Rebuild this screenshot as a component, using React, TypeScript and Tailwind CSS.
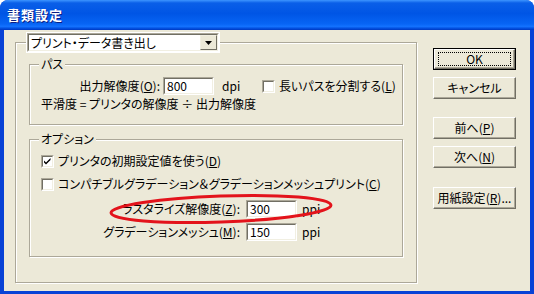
import React from "react";

const Key = ({ k }: { k: string }) => (
  <>
    (<span className="underline underline-offset-[1px]">{k}</span>)
  </>
);

const Sunken = ({ className = "", children }: { className?: string; children?: React.ReactNode }) => (
  <div
    className={`border border-t-[#ACA899] border-l-[#ACA899] border-b-white border-r-white ${className}`}
  >
    <div className="h-full w-full border border-t-[#716F64] border-l-[#716F64] border-b-[#F1EFE2] border-r-[#F1EFE2] bg-white">
      {children}
    </div>
  </div>
);

const TextBox = ({ value }: { value: string }) => (
  <Sunken className="w-[51px] h-[18px]">
    <div className="pl-[2px] leading-[14px] text-[12px]">{value}</div>
  </Sunken>
);

const Check = ({ checked }: { checked?: boolean }) => (
  <Sunken className="w-[13px] h-[13px] shrink-0">
    {checked && (
      <svg width="9" height="9" viewBox="0 0 9 9" className="block">
        <path d="M1 3.5 L3 5.5 L7.5 1 L7.5 3 L3 7.5 L1 5.5 Z" fill="#000" />
      </svg>
    )}
  </Sunken>
);

const Btn = ({ children, def }: { children: React.ReactNode; def?: boolean }) => (
  <div className={`h-[22px] w-[83px] ${def ? "border border-black" : ""}`}>
    <div className="h-full w-full border border-t-white border-l-white border-r-[#716F64] border-b-[#716F64] shadow-[inset_-1px_-1px_0_#ACA899] flex items-center justify-center">
      {def ? (
        <div className="border border-dotted border-black w-[73px] h-[14px] flex items-center justify-center leading-[12px]">
          {children}
        </div>
      ) : (
        <span className="leading-[14px]">{children}</span>
      )}
    </div>
  </div>
);

const group =
  "border border-[#ACA899] shadow-[inset_1px_1px_0_#fff,1px_1px_0_#fff] min-w-0";

export default function App() {
  return (
    <div className="relative w-[534px] h-[294px] rounded-t-[8px] bg-[#0842D6] flex flex-col overflow-hidden font-['Noto_Sans_CJK_JP',sans-serif] [font-feature-settings:'palt'] text-[12px] text-black">
      {/* TITLE BAR */}
      <div className="h-[30px] shrink-0 bg-[linear-gradient(to_bottom,#3D95FF_0%,#0A5FE8_10%,#0055E5_45%,#0765F5_80%,#1372FF_88%,#0048D8_96%,#0038C0_100%)] flex items-center pl-[7px]">
        <span className="text-white font-bold text-[13px] tracking-[1px] [text-shadow:1px_1px_0_#0A1E84]">
          書類設定
        </span>
      </div>

      {/* CLIENT */}
      <div className="flex-1 mx-[4px] mb-[4px] bg-[#ECE9D8] flex pl-[11px]">
        {/* MAIN GROUP */}
        <fieldset className={`${group} w-[402px] mt-[2px] mb-[8px] px-[13px] pb-[25px]`}>
          <legend className="ml-[-3px] bg-white p-[1px]">
            <Sunken className="w-[192px] h-[19px]">
              <div className="flex h-full items-center">
                <span className="flex-1 pl-[2px] leading-[14px]">プリント・データ書き出し</span>
                <div className="w-[17px] h-full border border-t-[#F1EFE2] border-l-[#F1EFE2] border-r-[#716F64] border-b-[#716F64] bg-[#ECE9D8] flex items-center justify-center">
                  <svg width="7" height="4" viewBox="0 0 7 4">
                    <path d="M0 0 H7 L3.5 4 Z" fill="#000" />
                  </svg>
                </div>
              </div>
            </Sunken>
          </legend>

          {/* PATH */}
          <fieldset className={`${group} mt-[4px] pl-[11px] pb-[13px]`}>
            <legend className="ml-[-2px] px-[2px] bg-[#ECE9D8] leading-[14px]">パス</legend>
            <div className="flex items-center h-[18px] mt-[6px]">
              <span className="w-[119px] text-right leading-[14px]">
                出力解像度<Key k="O" />:
              </span>
              <div className="ml-[3px]">
                <TextBox value="800" />
              </div>
              <span className="ml-[8px] w-[40px] leading-[14px]">dpi</span>
              <Check />
              <span className="ml-[4px] leading-[14px]">
                長いパスを分割する<Key k="L" />
              </span>
            </div>
            <div className="mt-[2px] leading-[14px]">平滑度 = プリンタの解像度 ÷ 出力解像度</div>
          </fieldset>

          {/* OPTIONS */}
          <fieldset className={`${group} mt-[7px] pl-[11px] pb-[15px]`}>
            <legend className="ml-[-2px] px-[2px] bg-[#ECE9D8] leading-[14px]">オプション</legend>
            <div className="flex items-center h-[14px] mt-[8px]">
              <Check checked />
              <span className="ml-[4px] leading-[14px]">
                プリンタの初期設定値を使う<Key k="D" />
              </span>
            </div>
            <div className="flex items-center h-[14px] mt-[9px]">
              <Check />
              <span className="ml-[4px] leading-[14px]">
                コンパチブルグラデーション＆グラデーションメッシュプリント<Key k="C" />
              </span>
            </div>
            <div className="flex items-center h-[18px] mt-[9px]">
              <span className="w-[199px] text-right leading-[14px]">
                ラスタライズ解像度<Key k="Z" />:
              </span>
              <div className="ml-[6px]">
                <TextBox value="300" />
              </div>
              <span className="ml-[5px] leading-[14px]">ppi</span>
            </div>
            <div className="flex items-center h-[18px] mt-[5px]">
              <span className="w-[199px] text-right leading-[14px]">
                グラデーションメッシュ<Key k="M" />:
              </span>
              <div className="ml-[6px]">
                <TextBox value="150" />
              </div>
              <span className="ml-[5px] leading-[14px]">ppi</span>
            </div>
          </fieldset>
        </fieldset>

        {/* BUTTONS */}
        <div className="ml-[16px] pt-[18px] flex flex-col">
          <Btn def>OK</Btn>
          <div className="mt-[7px]">
            <Btn>キャンセル</Btn>
          </div>
          <div className="mt-[18px]">
            <Btn>
              前へ<Key k="P" />
            </Btn>
          </div>
          <div className="mt-[7px]">
            <Btn>
              次へ<Key k="N" />
            </Btn>
          </div>
          <div className="mt-[19px]">
            <Btn>
              用紙設定<Key k="R" />...
            </Btn>
          </div>
        </div>
      </div>

      {/* RED ANNOTATION */}
      <svg
        className="absolute left-0 top-0 pointer-events-none"
        width="534"
        height="294"
        viewBox="0 0 534 294"
      >
        <ellipse
          cx="221"
          cy="209"
          rx="110"
          ry="13"
          transform="rotate(-2 221 209)"
          fill="none"
          stroke="#E3131B"
          strokeWidth="3"
        />
      </svg>
    </div>
  );
}
